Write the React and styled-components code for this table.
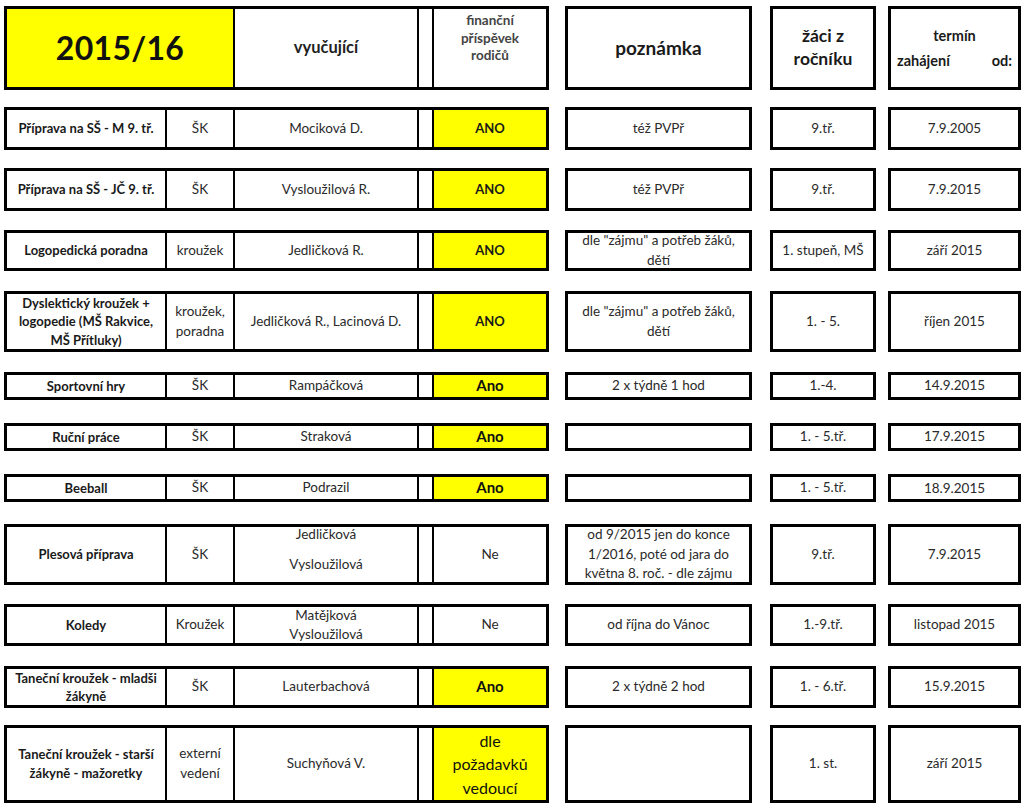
import React from "react";
import styled, { createGlobalStyle } from "styled-components";

const Global = createGlobalStyle`
  html, body { margin: 0; padding: 0; background: #fff; }
  body { font-family: Lato, "Open Sans", "Noto Sans", sans-serif; color: #222; }
`;

const Sheet = styled.div`
  display: flex;
  flex-direction: column;
  padding: 6px 3px 0 4px;
  width: 1024px;
  box-sizing: border-box;
`;

const Row = styled.div`
  display: flex;
  height: ${(p) => p.$h}px;
  margin-top: ${(p) => p.$mt}px;
`;

const Group = styled.div`
  display: grid;
  grid-template-columns: 158px 68px 184px 15px 114px;
  width: 545px;
  height: 100%;
  box-sizing: border-box;
  border: 3px solid #000;
  flex: none;
`;

const Cell = styled.div`
  display: flex;
  align-items: ${(p) => p.$valign || "center"};
  justify-content: center;
  text-align: center;
  box-sizing: border-box;
  min-width: 0;
  overflow: hidden;
  border-left: ${(p) => (p.$first ? "none" : "2px solid #000")};
  background: ${(p) => p.$bg || "#fff"};
  grid-column: ${(p) => (p.$span ? `span ${p.$span}` : "auto")};
  font-size: ${(p) => p.$size || 13.5}px;
  font-weight: ${(p) => (p.$bold ? 700 : 400)};
  line-height: ${(p) => p.$lh || 1.45};
  color: ${(p) => p.$color || "#2a2a2a"};
  padding: ${(p) => p.$pad || "0 3px"};
`;

const Box = styled.div`
  display: flex;
  align-items: ${(p) => p.$valign || "center"};
  justify-content: center;
  text-align: center;
  box-sizing: border-box;
  flex: none;
  width: ${(p) => p.$w}px;
  margin-left: ${(p) => p.$ml}px;
  height: 100%;
  border: 3px solid #000;
  overflow: hidden;
  font-size: ${(p) => p.$size || 13.5}px;
  font-weight: ${(p) => (p.$bold ? 700 : 400)};
  line-height: ${(p) => p.$lh || 1.45};
  color: ${(p) => p.$color || "#2a2a2a"};
  padding: ${(p) => p.$pad || "0 4px"};
`;

const Year = styled.span`
  font-size: 32px;
  font-weight: 700;
  color: #111;
  letter-spacing: 0.3px;
`;

const Justified = styled.span`
  display: block;
  width: 100%;
  text-align: justify;
  text-align-last: justify;
`;

const rows = [
  { h: 43, mt: 17, name: "Příprava na SŠ - M 9. tř.", type: "ŠK", teacher: "Mociková D.", fin: "ANO", finKind: "caps", note: "též PVPř", grade: "9.tř.", date: "7.9.2005" },
  { h: 43, mt: 18, name: "Příprava na SŠ - JČ 9. tř.", type: "ŠK", teacher: "Vysloužilová R.", fin: "ANO", finKind: "caps", note: "též PVPř", grade: "9.tř.", date: "7.9.2015" },
  { h: 41, mt: 19, name: "Logopedická poradna", type: "kroužek", teacher: "Jedličková R.", fin: "ANO", finKind: "caps", note: ["dle \"zájmu\" a potřeb žáků,", "dětí"], grade: "1. stupeň, MŠ", date: "září 2015" },
  { h: 61, mt: 20, name: ["Dyslektický kroužek +", "logopedie (MŠ Rakvice,", "MŠ Přítluky)"], nameLh: 1.4, type: ["kroužek,", "poradna"], teacher: "Jedličková R., Lacinová D.", fin: "ANO", finKind: "caps", note: ["dle \"zájmu\" a potřeb žáků,", "dětí"], grade: "1. - 5.", date: "říjen 2015" },
  { h: 28, mt: 20, name: "Sportovní hry", type: "ŠK", teacher: "Rampáčková", fin: "Ano", finKind: "big", note: "2 x týdně 1 hod", grade: "1.-4.", date: "14.9.2015" },
  { h: 28, mt: 23, name: "Ruční práce", type: "ŠK", teacher: "Straková", fin: "Ano", finKind: "big", note: "", grade: "1. - 5.tř.", date: "17.9.2015" },
  { h: 28, mt: 23, name: "Beeball", type: "ŠK", teacher: "Podrazil", fin: "Ano", finKind: "big", note: "", grade: "1. - 5.tř.", date: "18.9.2015", dateLow: true },
  { h: 61, mt: 22, name: "Plesová příprava", type: "ŠK", teacher: ["Jedličková", "Vysloužilová"], teacherLh: 2.2, teacherPad: "0 3px 10px", fin: "Ne", finKind: "plain", note: ["od 9/2015 jen do konce", "1/2016, poté od jara do", "května 8. roč. - dle zájmu"], grade: "9.tř.", date: "7.9.2015" },
  { h: 42, mt: 19, name: "Koledy", type: "Kroužek", teacher: ["Matějková", "Vysloužilová"], teacherLh: 1.4, fin: "Ne", finKind: "plain", note: "od října do Vánoc", grade: "1.-9.tř.", date: "listopad 2015" },
  { h: 42, mt: 20, name: ["Taneční kroužek - mladši", "žákyně"], nameLh: 1.4, type: "ŠK", teacher: "Lauterbachová", fin: "Ano", finKind: "big", note: "2 x týdně 2 hod", grade: "1. - 6.tř.", date: "15.9.2015" },
  { h: 78, mt: 17, name: ["Taneční kroužek - starší", "žákyně - mažoretky"], type: ["externí", "vedení"], teacher: "Suchyňová V.", fin: ["dle", "požadavků", "vedoucí"], finKind: "long", note: "", grade: "1. st.", date: "září 2015" },
];

const lines = (v) =>
  Array.isArray(v)
    ? v.map((l, i) => (
        <React.Fragment key={i}>
          {i > 0 && <br />}
          {l}
        </React.Fragment>
      ))
    : v;

const finProps = (kind) => {
  switch (kind) {
    case "caps":
      return { $bg: "#ffff00", $bold: true, $size: 13, $color: "#1a1a1a" };
    case "big":
      return { $bg: "#ffff00", $bold: true, $size: 15, $color: "#111" };
    case "long":
      return { $bg: "#ffff00", $size: 16, $lh: 1.45, $color: "#111" };
    default:
      return { $size: 13.5 };
  }
};

export default function App() {
  return (
    <>
      <Global />
      <Sheet>
        <Row $h={84} $mt={0}>
          <Group>
            <Cell $first $span={2} $bg="#ffff00">
              <Year>2015/16</Year>
            </Cell>
            <Cell $bold $size={16.5} $color="#222">vyučující</Cell>
            <Cell />
            <Cell $bold $size={13.5} $color="#444" $lh={1.3} $valign="flex-start" $pad="3px 3px 0">
              <span>
                finanční
                <br />
                příspěvek
                <br />
                rodičů
              </span>
            </Cell>
          </Group>
          <Box $w={187} $ml={16} $bold $size={19} $color="#1a1a1a">
            poznámka
          </Box>
          <Box $w={106} $ml={18} $bold $size={17.5} $lh={1.3} $color="#1a1a1a">
            <span>
              žáci z
              <br />
              ročníku
            </span>
          </Box>
          <Box $w={133} $ml={12} $bold $size={14.5} $lh={1.75} $pad="0 6px" $color="#1a1a1a">
            <span style={{ width: "100%" }}>
              termín
              <Justified>zahájení od:</Justified>
            </span>
          </Box>
        </Row>
        {rows.map((r, i) => (
          <Row key={i} $h={r.h} $mt={r.mt}>
            <Group>
              <Cell $first $bold $size={13} $lh={r.nameLh || 1.45} $color="#1a1a1a" $pad="0 2px">
                <span>{lines(r.name)}</span>
              </Cell>
              <Cell>
                <span>{lines(r.type)}</span>
              </Cell>
              <Cell $lh={r.teacherLh || 1.45} $pad={r.teacherPad}>
                <span>{lines(r.teacher)}</span>
              </Cell>
              <Cell />
              <Cell {...finProps(r.finKind)}>
                <span>{lines(r.fin)}</span>
              </Cell>
            </Group>
            <Box $w={187} $ml={16}>
              <span>{lines(r.note)}</span>
            </Box>
            <Box $w={106} $ml={18}>
              <span>{lines(r.grade)}</span>
            </Box>
            <Box $w={133} $ml={12} $valign={r.dateLow ? "flex-end" : "center"} $pad={r.dateLow ? "0 4px 0" : "0 4px"}>
              <span>{lines(r.date)}</span>
            </Box>
          </Row>
        ))}
      </Sheet>
    </>
  );
}
